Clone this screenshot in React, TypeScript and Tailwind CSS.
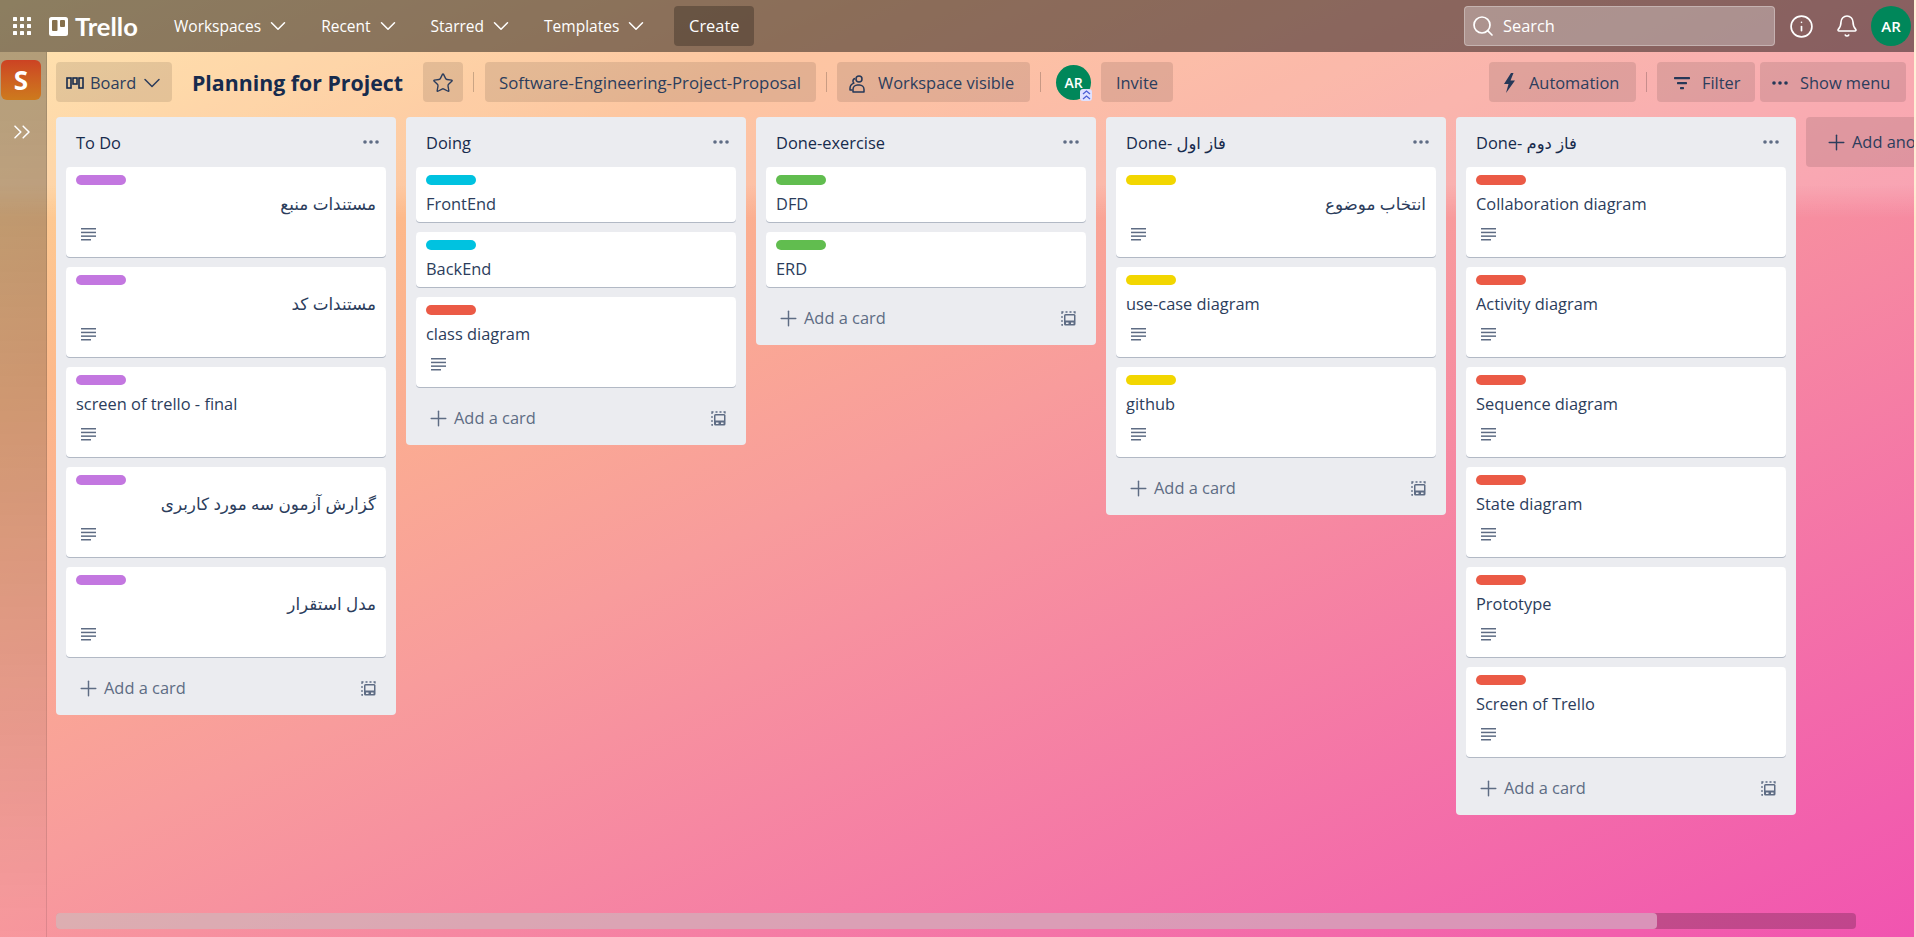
import { ChevronDown, ChevronsRight, Plus, Search, Star, Info, Bell } from "lucide-react";

type CardData = {
  title: string;
  label: string;
  rtl?: boolean;
  desc?: boolean;
};

type ListData = {
  title: string;
  cards: CardData[];
};

const PURPLE = "bg-[#c377e0]";
const RED = "bg-[#eb5a46]";
const CYAN = "bg-[#00c2e0]";
const GREEN = "bg-[#61bd4f]";
const YELLOW = "bg-[#f2d600]";

const lists: ListData[] = [
  {
    title: "To Do",
    cards: [
      { title: "مستندات منبع", label: PURPLE, rtl: true, desc: true },
      { title: "مستندات کد", label: PURPLE, rtl: true, desc: true },
      { title: "screen of trello - final", label: PURPLE, desc: true },
      { title: "گزارش آزمون سه مورد کاربری", label: PURPLE, rtl: true, desc: true },
      { title: "مدل استقرار", label: PURPLE, rtl: true, desc: true },
    ],
  },
  {
    title: "Doing",
    cards: [
      { title: "FrontEnd", label: CYAN },
      { title: "BackEnd", label: CYAN },
      { title: "class diagram", label: RED, desc: true },
    ],
  },
  {
    title: "Done-exercise",
    cards: [
      { title: "DFD", label: GREEN },
      { title: "ERD", label: GREEN },
    ],
  },
  {
    title: "Done- فاز اول",
    cards: [
      { title: "انتخاب موضوع", label: YELLOW, rtl: true, desc: true },
      { title: "use-case diagram", label: YELLOW, desc: true },
      { title: "github", label: YELLOW, desc: true },
    ],
  },
  {
    title: "Done- فاز دوم",
    cards: [
      { title: "Collaboration diagram", label: RED, desc: true },
      { title: "Activity diagram", label: RED, desc: true },
      { title: "Sequence diagram", label: RED, desc: true },
      { title: "State diagram", label: RED, desc: true },
      { title: "Prototype", label: RED, desc: true },
      { title: "Screen of Trello", label: RED, desc: true },
    ],
  },
];

function GridIcon() {
  return (
    <svg width="18" height="18" viewBox="0 0 18 18" fill="currentColor">
      {[0, 7, 14].map((y) =>
        [0, 7, 14].map((x) => <rect key={`${x}-${y}`} x={x} y={y} width="4" height="4" rx="0.6" />)
      )}
    </svg>
  );
}

function TrelloMark() {
  return (
    <svg width="19" height="19" viewBox="0 0 19 19">
      <rect width="19" height="19" rx="2.5" fill="#fff" />
      <rect x="3" y="3" width="5.5" height="11" rx="1" fill="#86704c" />
      <rect x="11" y="3" width="5" height="7" rx="1" fill="#86704c" />
    </svg>
  );
}

function BoardIcon() {
  return (
    <svg width="18" height="14" viewBox="0 0 18 14" fill="none" stroke="#172b4d" strokeWidth="1.6">
      <rect x="1" y="2" width="4" height="10" />
      <rect x="7" y="2" width="4" height="6" />
      <rect x="13" y="2" width="4" height="10" />
    </svg>
  );
}

function PeopleIcon() {
  return (
    <svg width="19" height="19" viewBox="0 0 19 19" fill="none" stroke="#253858" strokeWidth="1.5" strokeLinejoin="round">
      <circle cx="11" cy="5" r="3" />
      <path d="M5 18h11v-2.500c0-2.500-2-4.500-4.500-4.500h-2C7 11 5 13 5 15.500z" />
      <path d="M7 4.500c-1.500.5-2.200 1.700-2 3 .1.700.4 1.200.9 1.600C3.500 10 2 12 2 14.500V16h2.500" />
    </svg>
  );
}

function BoltIcon() {
  return (
    <svg width="13" height="20" viewBox="0 0 13 20" fill="#253858">
      <path d="M8 0 1 11h4.500L3 20l9-12.500H7.500L10.500 0z" />
    </svg>
  );
}

function FilterIcon() {
  return (
    <svg width="16" height="14" viewBox="0 0 16 14" fill="#253858">
      <rect x="0" y="1" width="16" height="2.200" rx="0.6" />
      <rect x="3" y="6" width="10" height="2.200" rx="0.6" />
      <rect x="6" y="11" width="4" height="2.200" rx="0.6" />
    </svg>
  );
}

function Dots({ color }: { color: string }) {
  return (
    <svg width="16" height="4" viewBox="0 0 16 4" fill={color}>
      <circle cx="2" cy="2" r="1.800" />
      <circle cx="8" cy="2" r="1.800" />
      <circle cx="14" cy="2" r="1.800" />
    </svg>
  );
}

function DescIcon() {
  return (
    <svg width="15" height="13" viewBox="0 0 15 13" fill="#5e6c84">
      <rect x="0" y="0" width="15" height="1.500" />
      <rect x="0" y="3.700" width="15" height="1.500" />
      <rect x="0" y="7.400" width="15" height="1.500" />
      <rect x="0" y="11" width="10" height="1.500" />
    </svg>
  );
}

function TemplateIcon() {
  return (
    <svg width="15" height="15" viewBox="0 0 15 15" fill="none">
      <path d="M1 3V1h1.500M4.500 1h2M8.500 1h2M12.500 1H14v1.500M1 5v2M1 9v2M1 13v1h1" stroke="#5e6c84" strokeWidth="1.300" />
      <rect x="3" y="3" width="11.500" height="11.500" rx="1.500" fill="#5e6c84" />
      <rect x="4.500" y="4.500" width="8.500" height="5" fill="#ebecf0" />
      <rect x="5" y="11.500" width="2.500" height="1.500" fill="#ebecf0" />
      <rect x="10" y="11.500" width="2.500" height="1.500" fill="#ebecf0" />
    </svg>
  );
}

function Avatar({ className }: { className: string }) {
  return (
    <div className={`flex items-center justify-center rounded-full bg-[#00875a] font-semibold text-white ${className}`}>
      AR
    </div>
  );
}

function NavMenu({ label, className }: { label: string; className: string }) {
  return (
    <div className={`flex items-center text-[15.5px] text-white ${className}`}>
      <span className="pt-[1px] whitespace-nowrap">{label}</span>
      <ChevronDown size={26} strokeWidth={1.4} className="ml-[4px]" />
    </div>
  );
}

function HeaderButton({ children, className }: { children: React.ReactNode; className: string }) {
  return (
    <div className={`flex h-10 items-center rounded-[4px] bg-black/10 pt-[2px] text-[16.4px] text-[#2c3d5c] ${className}`}>
      {children}
    </div>
  );
}

function Divider({ className }: { className: string }) {
  return (
    <div className={`flex h-10 items-center ${className}`}>
      <div className="h-[20px] w-px bg-black/20" />
    </div>
  );
}

function Card({ card }: { card: CardData }) {
  return (
    <div className="mb-[10px] rounded-[4px] bg-white px-[10px] pt-2 pb-[5px] shadow-[0_1px_0_#091e4240]">
      <div className={`h-[10px] w-[50px] rounded-[5px] ${card.label}`} />
      <div
        dir={card.rtl ? "rtl" : "ltr"}
        className={`mt-[5px] h-[27px] leading-[27px] text-[#2c3d5c] ${card.rtl ? "text-[16.8px]" : "text-[16.4px]"}`}
      >
        {card.title}
      </div>
      {card.desc && (
        <div className="mt-[10px] mb-[10px] flex h-[15px] items-center pl-[5px]">
          <DescIcon />
        </div>
      )}
    </div>
  );
}

function List({ list }: { list: ListData }) {
  return (
    <div className="w-[340px] shrink-0 self-start rounded-[4px] bg-[#ebecf0]">
      <div className="flex h-[50px] items-center justify-between pr-[17px] pl-[20px]">
        <span className="pt-[2px] text-[16.4px] font-medium text-[#172b4d]">{list.title}</span>
        <Dots color="#5e6c84" />
      </div>
      <div className="px-[10px]">
        {list.cards.map((card, i) => (
          <Card key={i} card={card} />
        ))}
      </div>
      <div className="mb-[6px] flex h-[42px] items-center justify-between pr-[20px] pl-[20px] text-[16.4px] text-[#5e6c84]">
        <span className="flex items-center">
          <Plus size={25} strokeWidth={1.4} className="mr-[3px]" />
          Add a card
        </span>
        <TemplateIcon />
      </div>
    </div>
  );
}

export default function App() {
  return (
    <div
      className="flex h-screen w-full flex-col overflow-hidden border-r-2 border-white/50 bg-[linear-gradient(180deg,rgba(255,255,255,0.2)_0,rgba(255,255,255,0.2)_185px,rgba(255,255,255,0)_218px),linear-gradient(155deg,#ffdf9c_0%,#fdb98a_22%,#f89c9c_48%,#f154b0_100%)]"
      style={{ fontFamily: '"Open Sans", "DejaVu Sans", sans-serif' }}
    >
      {/* top nav */}
      <div className="flex h-[52px] shrink-0 items-center bg-black/45 pr-[3px] text-white">
        <div className="ml-[13px]">
          <GridIcon />
        </div>
        <div className="ml-[18px] flex items-center">
          <TrelloMark />
          <span className="ml-[7px] w-[67px] text-[25.5px] font-bold text-white" style={{ fontFamily: "Lato, sans-serif" }}>
            Trello
          </span>
        </div>
        <NavMenu label="Workspaces" className="ml-[32px]" />
        <NavMenu label="Recent" className="ml-[30px]" />
        <NavMenu label="Starred" className="ml-[30px]" />
        <NavMenu label="Templates" className="ml-[30px]" />
        <div className="ml-[25px] flex h-10 w-[80px] items-center justify-center rounded-[4px] bg-black/25 pt-[1px] text-[16.4px]">
          Create
        </div>
        <div className="ml-auto flex h-10 w-[311px] items-center rounded-[4px] border border-white/30 bg-white/30 pl-[6px] text-[16.4px]">
          <Search size={24} strokeWidth={1.7} />
          <span className="ml-[8px] pt-[1px]">Search</span>
        </div>
        <Info size={25} strokeWidth={1.6} className="ml-[14px]" />
        <Bell size={24} strokeWidth={1.6} className="ml-[21px]" />
        <Avatar className="ml-[12px] h-10 w-10 text-[15px]" />
      </div>

      <div className="flex min-h-0 flex-1">
        {/* collapsed workspace sidebar */}
        <div className="flex w-[47px] shrink-0 flex-col border-r border-black/10 bg-gradient-to-b from-black/30 to-black/0 pt-[8px] pl-[1px]">
          <div className="flex h-[40px] w-[40px] items-center justify-center rounded-[6px] bg-gradient-to-b from-[#cc4223] to-[#cd7a1d] text-[26px] font-bold text-white">
            S
          </div>
          <ChevronsRight size={28} strokeWidth={1.3} className="mt-[18px] ml-[7px] text-white" />
        </div>

        <div className="flex min-w-0 flex-1 flex-col">
          {/* board header */}
          <div className="flex h-[65px] shrink-0 items-start pt-[10px] pl-[9px]">
            <HeaderButton className="w-[116px] pl-[10px]">
              <BoardIcon />
              <span className="ml-[6px]">Board</span>
              <ChevronDown size={28} strokeWidth={1.3} className="ml-[2px]" />
            </HeaderButton>
            <div className="ml-[20px] flex h-10 w-[211px] items-center pt-[2px] text-[21.3px] font-bold whitespace-nowrap text-[#172b4d]">
              Planning for Project
            </div>
            <HeaderButton className="ml-[20px] w-10 justify-center">
              <Star size={22} strokeWidth={1.5} />
            </HeaderButton>
            <Divider className="mr-[11px] ml-[10px]" />
            <HeaderButton className="w-[331px] pl-[14px] whitespace-nowrap">
              <span className="text-[16.8px]">Software-Engineering-Project-Proposal</span>
            </HeaderButton>
            <Divider className="mx-[10px]" />
            <HeaderButton className="w-[193px] pl-[11px] whitespace-nowrap">
              <PeopleIcon />
              <span className="ml-[11px]">Workspace visible</span>
            </HeaderButton>
            <Divider className="mx-[10px]" />
            <div className="relative mt-[3px] ml-[5px]">
              <Avatar className="h-[35px] w-[35px] text-[14px]" />
              <div className="absolute right-[-1px] bottom-[-1px] flex h-[12px] w-[12px] flex-col items-center justify-center rounded-[3px] bg-[#dfe1ff]">
                <svg width="9" height="10" viewBox="0 0 9 10" fill="none" stroke="#4c5fd5" strokeWidth="1.300">
                  <path d="M1 4l3.500-3L8 4M1 9l3.500-3L8 9" />
                </svg>
              </div>
            </div>
            <HeaderButton className="ml-[10px] w-[72px] justify-center">Invite</HeaderButton>
            <div className="ml-auto flex items-center">
              <HeaderButton className="w-[147px] pl-[14px]">
                <BoltIcon />
                <span className="ml-[13px]">Automation</span>
              </HeaderButton>
              <Divider className="mx-[10px]" />
              <HeaderButton className="w-[98px] pl-[17px]">
                <FilterIcon />
                <span className="ml-[12px]">Filter</span>
              </HeaderButton>
              <HeaderButton className="mr-[8px] ml-[5px] w-[146px] pl-[12px]">
                <Dots color="#253858" />
                <span className="ml-[12px] whitespace-nowrap">Show menu</span>
              </HeaderButton>
            </div>
          </div>

          {/* lists */}
          <div className="flex min-h-0 flex-1 gap-[10px] overflow-hidden pl-[9px]">
            {lists.map((list, i) => (
              <List key={i} list={list} />
            ))}
            <div className="flex h-[50px] w-[340px] shrink-0 items-center rounded-[4px] bg-black/10 pl-[18px] text-[16.4px] text-[#2c3d5c]">
              <Plus size={25} strokeWidth={1.4} className="mr-[3px]" />
              Add another list
            </div>
          </div>

          {/* board scrollbar */}
          <div className="mr-[58px] mb-2 ml-[9px] h-4 shrink-0 rounded-[4px] bg-black/20">
            <div className="h-full w-[1601px] rounded-[4px] bg-white/40" />
          </div>
        </div>
      </div>
    </div>
  );
}
